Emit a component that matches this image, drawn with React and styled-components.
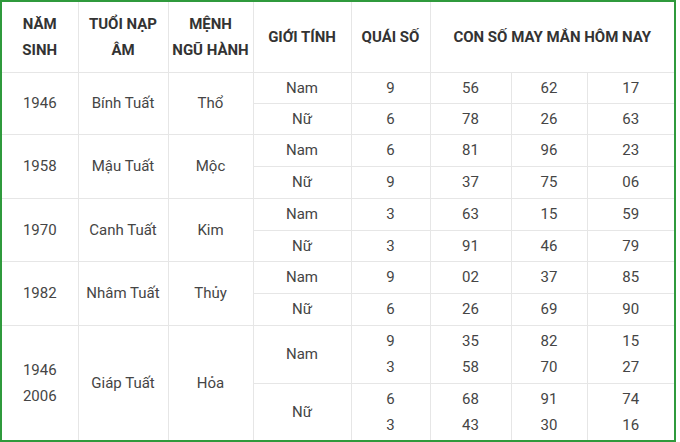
import React from "react";
import styled, { createGlobalStyle } from "styled-components";

const GlobalStyle = createGlobalStyle`
  html, body {
    margin: 0;
    padding: 0;
    background: #ffffff;
  }
  body {
    font-family: Roboto, "Noto Sans", Arial, sans-serif;
  }
`;

const data = [
  { year: ["1946"], napAm: "Bính Tuất", menh: "Thổ", rows: [
    { sex: "Nam", quai: ["9"], nums: [["56"], ["62"], ["17"]] },
    { sex: "Nữ", quai: ["6"], nums: [["78"], ["26"], ["63"]] },
  ] },
  { year: ["1958"], napAm: "Mậu Tuất", menh: "Mộc", rows: [
    { sex: "Nam", quai: ["6"], nums: [["81"], ["96"], ["23"]] },
    { sex: "Nữ", quai: ["9"], nums: [["37"], ["75"], ["06"]] },
  ] },
  { year: ["1970"], napAm: "Canh Tuất", menh: "Kim", rows: [
    { sex: "Nam", quai: ["3"], nums: [["63"], ["15"], ["59"]] },
    { sex: "Nữ", quai: ["3"], nums: [["91"], ["46"], ["79"]] },
  ] },
  { year: ["1982"], napAm: "Nhâm Tuất", menh: "Thủy", rows: [
    { sex: "Nam", quai: ["9"], nums: [["02"], ["37"], ["85"]] },
    { sex: "Nữ", quai: ["6"], nums: [["26"], ["69"], ["90"]] },
  ] },
  { year: ["1946", "2006"], napAm: "Giáp Tuất", menh: "Hỏa", tall: true, rows: [
    { sex: "Nam", quai: ["9", "3"], nums: [["35", "58"], ["82", "70"], ["15", "27"]] },
    { sex: "Nữ", quai: ["6", "3"], nums: [["68", "43"], ["91", "30"], ["74", "16"]] },
  ] },
];

const widths = [76, 90, 85, 98, 79, 81, 76, 87];
const rowHeights = [[31, 31], [32, 32], [32, 31], [32, 32], [58, 57]];

function Lines({ items }) {
  return items.map((t, i) => <Line key={i}>{t}</Line>);
}

export default function App() {
  return (
    <>
      <GlobalStyle />
      <Frame>
        <Table>
          <colgroup>
            {widths.map((w, i) => <col key={i} style={{ width: w }} />)}
          </colgroup>
          <thead>
            <HeadRow>
              <Th><Line>NĂM</Line><Line>SINH</Line></Th>
              <Th><Line>TUỔI NẠP</Line><Line>ÂM</Line></Th>
              <Th><Line>MỆNH</Line><Line>NGŨ HÀNH</Line></Th>
              <Th>GIỚI TÍNH</Th>
              <Th>QUÁI SỐ</Th>
              <Th colSpan={3}>CON SỐ MAY MẮN HÔM NAY</Th>
            </HeadRow>
          </thead>
          <tbody>
            {data.map((g, gi) =>
              g.rows.map((r, ri) => (
                <Row key={gi + "-" + ri} style={{ height: rowHeights[gi][ri] }}>
                  {ri === 0 && (
                    <>
                      <Td rowSpan={2}><Lines items={g.year} /></Td>
                      <Td rowSpan={2}>{g.napAm}</Td>
                      <Td rowSpan={2}>{g.menh}</Td>
                    </>
                  )}
                  <Td $sub>{r.sex}</Td>
                  <Td $sub><Lines items={r.quai} /></Td>
                  {r.nums.map((n, ni) => (
                    <Td $sub key={ni}><Lines items={n} /></Td>
                  ))}
                </Row>
              ))
            )}
          </tbody>
        </Table>
      </Frame>
    </>
  );
}

const Frame = styled.div`
  width: 672px;
  height: 438px;
  border: 2px solid #2f9a3c;
  border-right-width: 2px;
  background: #fff;
  overflow: hidden;
`;

const Table = styled.table`
  width: 672px;
  table-layout: fixed;
  border-collapse: collapse;
  border-style: hidden;
  color: #454545;
`;

const HeadRow = styled.tr`
  height: 70px;
`;

const Th = styled.th`
  padding: 0;
  border: 1px solid #e6e6e6;
  font-size: 15px;
  font-weight: 700;
  color: #333;
  line-height: 26px;
  text-align: center;
  vertical-align: middle;
`;

const Row = styled.tr``;

const Td = styled.td`
  padding: 0;
  border: 1px solid #e6e6e6;
  font-size: 15px;
  line-height: 26px;
  text-align: center;
  vertical-align: middle;
`;

const Line = styled.div`
  line-height: 26px;
`;
